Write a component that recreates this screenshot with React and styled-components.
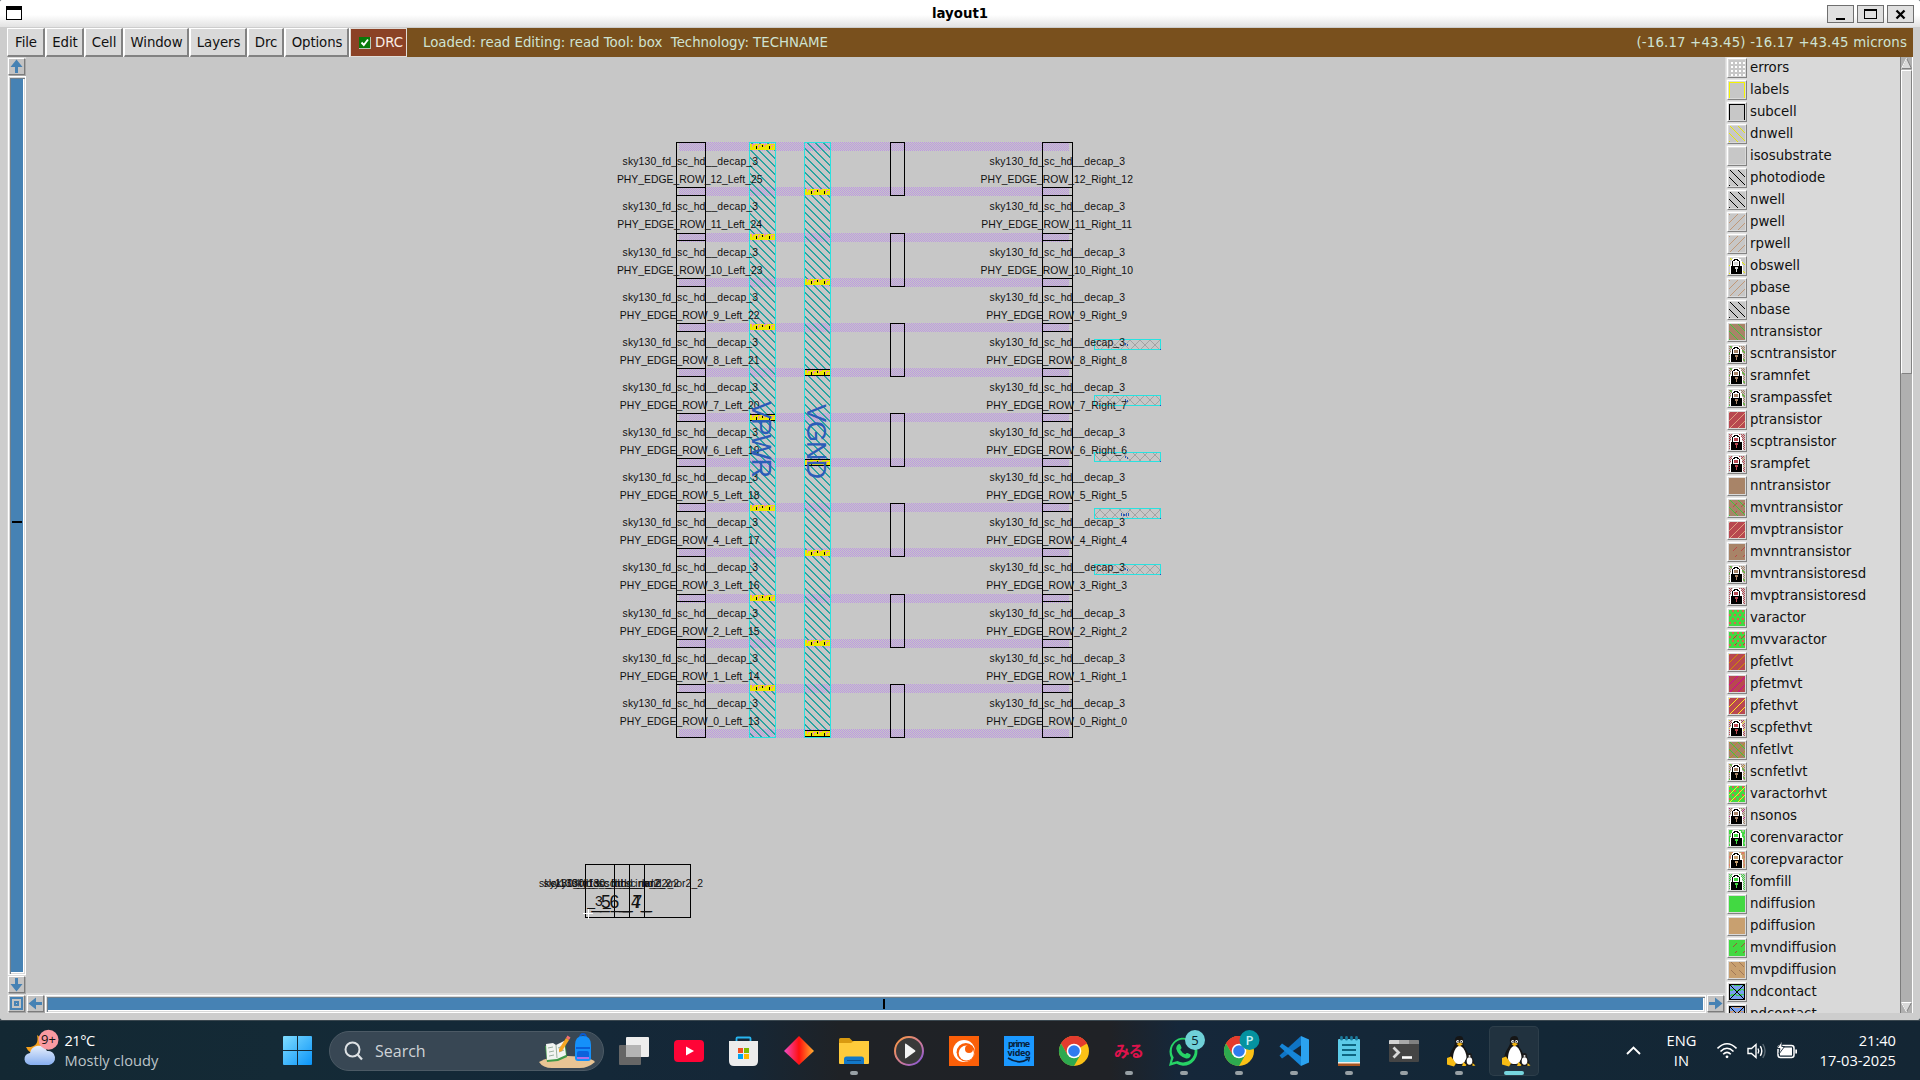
import React from 'react';
import styled, { createGlobalStyle, css } from 'styled-components';

const Global = createGlobalStyle`
  * { box-sizing: border-box; }
  html, body { margin: 0; padding: 0; overflow: hidden; background: #13262f; }
  svg { display: block; flex: none; }
`;

const ui = `"DejaVu Sans", sans-serif`;
const seg = `"Open Sans", "Noto Sans", sans-serif`;

const Desktop = styled.div`
  width: 1920px; height: 1080px; display: flex; flex-direction: column; overflow: hidden;
  background: #10222c;
`;
const Window = styled.div`
  height: 1020px; display: flex; flex-direction: column; background: #cdcdcd;
  border-radius: 2px; overflow: hidden; font-family: ${ui}; font-size: 13.33px; color: #111;
`;
const TitleBar = styled.div`
  height: 27px; flex: none; display: grid; grid-template-columns: 120px 1fr 120px; align-items: center;
  padding: 0 6px; background: linear-gradient(#fff 0, #fff 55%, #e2e2e2 100%);
`;
const Title = styled.div`text-align: center; font-weight: bold; color: #000; line-height: 27px; margin-top: -1px;`;
const WinButtons = styled.div`display: flex; justify-content: flex-end; gap: 3px; padding-top: 1px;`;
const WinButton = styled.div`
  width: 27px; height: 18px; border: 1px solid #6f6f6f; background: #e0e0e0;
  display: flex; align-items: center; justify-content: center;
`;
const Frame = styled.div`
  margin: 1px 7px 7px; flex: 1; min-height: 0; display: flex; flex-direction: column; background: #d9d9d9;
`;
const MenuRow = styled.div`height: 29px; flex: none; display: flex; background: #79501d;`;
const MenuButton = styled.div`
  width: ${p => p.$w}px; height: 29px; background: #d9d9d9; border: solid; border-width: 1px 2px 2px 1px;
  border-color: #fff #828282 #828282 #fff; display: flex; align-items: center; justify-content: center;
  white-space: nowrap; margin-right: 1px; box-shadow: 1px 0 0 #fff; line-height: 15px; padding-left: 1px; letter-spacing: -0.1px;
`;
const DrcButton = styled.div`
  width: 57px; height: 29px; background: #8b4226; border: 1px solid #e0dcd8;
  display: flex; align-items: center; gap: 4px; padding-left: 8px; color: #fbefe6;
`;
const Status = styled.div`
  flex: 1; display: flex; justify-content: space-between; align-items: center; padding: 0 6px 0 16px;
  color: #cfe3d3; white-space: pre;
`;
const StatusLeft = styled.span`letter-spacing: -0.01px;`;
const StatusRight = styled.span`letter-spacing: 0.16px;`;
const Body = styled.div`flex: 1; min-height: 0; display: grid; grid-template-columns: 1718px 175px 13px;`;
const Left = styled.div`display: flex; flex-direction: column; min-height: 0;`;
const CanvasRow = styled.div`height: 936px; flex: none; display: flex;`;
const VScroll = styled.div`width: 19px; display: flex; flex-direction: column; align-items: center; padding: 1px 0 0 0; gap: 1px;`;
const HScroll = styled.div`height: 20px; display: flex; align-items: center; padding: 1px 1px 0 1px; gap: 1px;`;
const Arrow = styled.div`
  width: 17px; height: 17px; flex: none; border: 1px solid; border-color: #fff #7b7b7b #7b7b7b #fff; background: #c3c3c3;
  box-shadow: 1px 1px 0 #a8a8a8; margin-right: ${p => p.$mr || 0}px;
  display: flex; align-items: center; justify-content: center;
`;
const Trough = styled.div`
  ${p => p.$v ? css`width: 18px; flex: 1; padding-bottom: 8px;` : css`height: 18px; flex: 1; padding-left: 16px;`}
  border: 1px solid #fff; background: #4682b4; display: flex; align-items: center; justify-content: center;
  box-shadow: inset 1px 1px 0 #d9d9d9, inset 2px 2px 0 #6f7f8c, inset -1px -1px 0 #d9d9d9, inset -2px -2px 0 #fff;
`;
const Mark = styled.div`background: #000; width: ${p => p.$v ? 10 : 2}px; height: ${p => p.$v ? 2 : 10}px;`;
const CanvasBox = styled.div`width: 1699px; height: 936px; background: #c7c7c7;`;

const Palette = styled.div`overflow: hidden; padding-left: 2px; height: 956px; background: #d9d9d9;`;
const LayerRow = styled.div`height: 22px; display: flex; align-items: center; gap: 3px;`;
const Swatch = styled.div`
  width: 20px; height: 20px; border: 1px solid; border-color: #fff #828282 #828282 #fff; padding: 1px;
  box-shadow: -0.5px -0.5px 0 #f2f2f2;
`;
const LayerName = styled.span`line-height: 16px; letter-spacing: -0.02px;`;
const Bar = styled.div`width: 13px; background: #b0b0b0; border-left: 1px solid #7c7c7c; border-right: 1px solid #fff; display: flex; flex-direction: column; height: 956px;`;
const Thumb = styled.div`height: 304px; background: #d9d9d9; border: 1px solid; border-color: #fff #828282 #828282 #fff; margin-bottom: auto;`;

const Taskbar = styled.div`
  height: 60px; border-top: 1px solid #3a474f; display: flex; align-items: center; color: #fff; font-family: ${seg};
  background: linear-gradient(90deg, #132833 0, #142a36 280px, #142838 600px, #152737 740px, #1f2226 840px, #202226 1110px, #15273a 1180px, #132736 1540px, #142634 1920px);
`;
const Weather = styled.div`width: 283px; display: flex; align-items: center; padding-left: 24px; gap: 5.5px;`;
const Lines = styled.div`
  display: flex; flex-direction: column; font-size: 14.65px; line-height: 20px; white-space: nowrap;
  text-align: ${p => p.$align || 'left'}; padding-bottom: 1px; margin-left: ${p => p.$push ? 'auto' : 0};
`;
const Line = styled.span`letter-spacing: ${p => p.$ls || 0}px; color: ${p => p.$dim ? '#bcc4c9' : '#fff'};`;
const Search = styled.div`
  width: 275px; height: 40px; margin-left: 17px; border-radius: 20px; border: 1px solid #4c5a65; background: #384754;
  display: flex; align-items: center; padding: 0 7px 0 13px;
`;
const SearchText = styled.span`flex: 1; padding-left: 10px; font-size: 16px; color: #ced3d7; line-height: 20px;`;
const Apps = styled.div`display: flex; margin-left: 2.5px;`;
const Slot = styled.div`width: 55px; height: 58px; display: flex; flex-direction: column; align-items: center; padding: 0 2.5px;`;
const AppFace = styled.div`
  width: 50px; height: 50px; margin-top: 4px; border-radius: 5px; display: flex; flex-direction: column; align-items: center;
  ${p => p.$active && css`background: #21323f; box-shadow: inset 0 0 0 1px #2d3e4a;`}
`;
const Dot = styled.div`
  height: 4px; border-radius: 2px; margin-top: -5px; width: ${p => p.$active ? 20 : 8}px; z-index: 1;
  background: ${p => p.$active ? '#76d5de' : '#98a0a5'};
`;
const Tray = styled.div`flex: 1; display: flex; align-items: center; padding: 0 24px 0 84px;`;
const Spacer = styled.div`width: ${p => p.$w}px; flex: none;`;

/* ---------- layer palette ---------- */
const G = '#c7c7c7', BR = '#a88468', RD = '#b84850', GN = '#42d942', TN = '#c8a070', YL = '#e8e800';
const pix = test => {
  let d = '';
  for (let y = 0; y < 16; y++) for (let x = 0; x < 16; x++) if (test(x, y)) d += `M${x} ${y}h1v1h-1z`;
  return d;
};
const P = {
  back: pix((x, y) => (x - y + 16) % 8 === 1),
  fwd: pix((x, y) => (x + y) % 8 === 0),
  fwdShort: pix((x, y) => (x + y) % 8 === 2 && y % 8 > 2 && y % 8 < 7 && (x + (y > 8 ? 4 : 0)) % 8 > 1),
  backShort: pix((x, y) => (x - y + 16) % 8 === 2 && (y % 8 < 5)),
  check: pix((x, y) => (x + y) % 2 === 0),
  dots: pix((x, y) => x % 4 > 1 && y % 4 > 1),
  blobs: pix((x, y) => y % 4 < 2 && (x + (y % 8 < 4 ? 2 : 0)) % 5 < 2),
  frame: pix((x, y) => y === 0 || x === 0 || x === 15),
  waves: pix((x, y) => y % 5 < 2 && (x + y * 3) % 8 < 6),
  cross: pix((x, y) => x === y || x + y === 15 || y === 0 || y === 15 || x === 0 || x === 15),
};
const layers = [
  ['errors', G, [['dots', '#fff']]], ['labels', G, [['frame', '#f4f400']]], ['subcell', G, [['frame', '#000']]],
  ['dnwell', G, [['back', YL]]], ['isosubstrate', G, []], ['photodiode', G, [['back', '#000']]], ['nwell', G, [['back', '#000']]],
  ['pwell', G, [['fwd', '#c09878']]], ['rpwell', G, [['fwd', '#c09878']]], ['obswell', G, [['back', YL]], 1],
  ['pbase', G, [['fwd', '#c09878']]], ['nbase', G, [['back', '#000']]], ['ntransistor', BR, [['back', '#3cc83c']]],
  ['scntransistor', G, [['check', BR], ['back', GN]], 1], ['sramnfet', G, [['check', BR], ['back', GN]], 1],
  ['srampassfet', G, [['check', BR], ['back', GN]], 1], ['ptransistor', RD, [['fwd', '#e0a080']]],
  ['scptransistor', G, [['check', RD]], 1], ['srampfet', G, [['check', RD], ['fwd', TN]], 1], ['nntransistor', BR, []],
  ['mvntransistor', BR, [['back', '#3cc83c'], ['fwdShort', '#c04848']]], ['mvptransistor', RD, [['fwd', '#e0a080']]],
  ['mvnntransistor', BR, [['fwdShort', '#b84848']]], ['mvntransistoresd', G, [['check', BR], ['back', GN]], 1],
  ['mvptransistoresd', G, [['check', RD]], 1], ['varactor', GN, [['blobs', '#e06050']]],
  ['mvvaractor', GN, [['blobs', '#e06050'], ['fwdShort', '#a05030']]], ['pfetlvt', RD, [['fwd', '#d09000']]],
  ['pfetmvt', RD, [['fwd', '#d000a0']]], ['pfethvt', RD, [['fwd', '#ffe820']]],
  ['scpfethvt', G, [['check', RD], ['fwd', '#f0d020']], 1], ['nfetlvt', BR, [['fwd', '#b89020'], ['back', '#3cc83c']]],
  ['scnfetlvt', G, [['check', BR], ['fwd', '#c09020'], ['back', GN]], 1],
  ['varactorhvt', GN, [['blobs', '#e06050'], ['fwd', '#f0f020']]], ['nsonos', G, [['check', BR], ['fwd', '#c02080']], 1],
  ['corenvaractor', GN, [['blobs', '#a0c890']], 1], ['corepvaractor', TN, [['blobs', '#e07868']], 1],
  ['fomfill', G, [['check', GN]], 1], ['ndiffusion', GN, []], ['pdiffusion', TN, []],
  ['mvndiffusion', GN, [['fwdShort', '#a05038']]], ['mvpdiffusion', TN, [['backShort', '#a07858']]],
  ['ndcontact', '#78a0f0', [['waves', '#42c860'], ['cross', '#000']]],
  ['pdcontact', '#78a0f0', [['waves', '#c8a080'], ['cross', '#000']]],
];
const Lock = ({ tint }) => (
  <g>
    <path d="M4 0h6v1h2v2h1v4h1v9H1V7h1V3h1V1h1z" fill="#fff" />
    <path d="M5 4h4v3H5z" fill={tint} />
    <path d="M5 1h4v1H5zM4 2h2v1H4zM8 2h2v1H8zM3 3h1v5H3zM10 3h1v5h-1zM2 8h11v8H2z" fill="#000" />
    <path d="M6 9h3v2H8v3H7v-3H6z" fill={tint} />
    <path d="M4 7h6v1H4z" fill="#fff" />
  </g>
);
const LayerIcon = ({ bg, marks, lock }) => (
  <svg width="16" height="16" viewBox="0 0 16 16" shapeRendering="crispEdges">
    <rect width="16" height="16" fill={bg} />
    {marks.map(([k, c], i) => <path key={i} d={P[k]} fill={c} />)}
    {lock && <Lock tint={marks[0][1] === YL ? '#d8d8d8' : marks[0][0] === 'blobs' ? bg : marks[0][1]} />}
  </svg>
);

/* ---------- layout canvas ---------- */
const tops = [142, 187, 233, 278, 323, 368, 413, 458, 503, 548, 594, 639, 684];
const bands = [...tops, 729];
const diag = (n, f, w = 1) => Array.from({ length: n }, (_, i) => `M${i} ${f(i)}h${w}v1h-${w}z`).join('');
const Via = ({ x, y, dark }) => (
  <g>
    <rect x={x} y={y} width="25" height={dark ? 5 : 6} fill="#ebe800" />
    {[2, 8, 14, 21].map((o, i) => <path key={o} d={`M${x + o} ${y + (i % 2)}h3v1h-2v2h-1z`} fill="#f888b0" />)}
    <path d={`M${x + 6} ${y + 2}h1v3h-1zM${x + 12} ${y + 1}h1v2h-1zM${x + 19} ${y + 2}h1v3h-1z`} fill="#000" />
    {dark && <path d={`M${x} ${y - 1}h25v1h-25zM${x} ${y + 5}h25v1h-25z`} fill="#000" />}
  </g>
);
const T = ({ x, y, s = 10.4, children, ...r }) => (
  <text x={x} y={y} fontSize={s} textAnchor="middle" fontFamily='"Liberation Sans", Arial, sans-serif' fill="#111" {...r}>{children}</text>
);
const LayoutDrawing = () => (
  <svg width="1699" height="936" viewBox="26 57 1699 936">
    <defs>
      <pattern id="purple" width="2" height="2" patternUnits="userSpaceOnUse">
        <path d="M0 0h1v1h-1zM1 1h1v1h-1z" fill="#bd98e2" />
      </pattern>
      <pattern id="hatch" width="8" height="8" patternUnits="userSpaceOnUse">
        <path d={diag(8, i => i, 2) + 'M0 7h1v1h-1z'} fill="#2aa4a1" />
      </pattern>
      <pattern id="mesh" width="10" height="10" patternUnits="userSpaceOnUse">
        <path d={diag(10, i => i) + diag(10, i => 9 - i)} fill="#a3a3a3" />
      </pattern>
    </defs>
    <g shapeRendering="crispEdges">
      {bands.map(y => <rect key={y} x="679" y={y} width="390" height="9" fill="url(#purple)" />)}
      {[749, 804].map(x => (
        <g key={x}>
          <rect x={x} y="142" width="27" height="596" fill="url(#hatch)" />
          <rect x={x + 0.5} y="142.5" width="26" height="595" fill="none" stroke="#28e2e0" />
        </g>
      ))}
      {bands.map((y, k) => <Via key={y} x={k % 2 ? 805 : 750} y={Math.round(144 + 45.12 * k)} dark={[5, 6, 7, 13].includes(k)} />)}
      {tops.map((y, k) => (
        <g key={y} fill="none" stroke="#000">
          <rect x="676.5" y={y + 0.5} width="29" height="53" />
          <rect x="1042.5" y={y + 0.5} width="30" height="53" />
          {k % 2 === 0 && <rect x="890.5" y={y + 0.5} width="14" height="53" />}
        </g>
      ))}
      {[[339, 11], [395, 11], [452, 10], [508, 11], [564, 11]].map(([y, h], i) => (
        <g key={y}>
          <rect x="1094" y={y} width="67" height={h} fill="url(#mesh)" />
          <rect x="1094.5" y={y + 0.5} width="66" height={h - 1} fill="none" stroke="#28e2e0" />
          <path d={i === 3 ? `M1121 ${y + 5}h1v3h-1zM1123 ${y + 6}h2v2h-2zM1126 ${y + 5}h1v3h-1zM1128 ${y + 5}h1v3h-1z` : `M1125 ${y + 4}h1v2h-1zM1127 ${y + 5}h1v2h-1z`} fill="#2d5cb8" />
          <rect x="1160" y={y + h - 1} width="1" height="1" fill="#1f50c0" />
        </g>
      ))}
    </g>
    {tops.map((y, k) => {
      const n = 12 - k;
      return (
        <g key={y}>
          <T x={690.3} y={y + 23} textLength="135.500">sky130_fd_sc_hd__decap_3</T>
          <T x={689.7} y={y + 41}>{`PHY_EDGE_ROW_${n}_Left_${n + 13}`}</T>
          <T x={1057.3} y={y + 23} textLength="135.500">sky130_fd_sc_hd__decap_3</T>
          <T x={1056.7} y={y + 41}>{`PHY_EDGE_ROW_${n}_Right_${n}`}</T>
        </g>
      );
    })}
    <g fontFamily='"Liberation Sans", Arial, sans-serif' fontSize="27" fill="#2d5cb8">
      <text transform="translate(752 401) rotate(90)" textLength="77">VPWR</text>
      <text transform="translate(807 404) rotate(90)" textLength="75">VGND</text>
    </g>
    <g shapeRendering="crispEdges" fill="none" stroke="#000">
      <rect x="585.5" y="864.5" width="105" height="53" />
      <path d="M614.5 864v53M629.5 864v53M644.5 864v53" />
    </g>
    <T x="600" y="886.5" textLength="122">sky130_fd_sc_hd__inv_2</T>
    <T x="607.5" y="886.5" textLength="128">sky130_fd_sc_hd__nor2_2</T>
    <T x="615" y="886.5" textLength="128">sky130_fd_sc_hd__and2_2</T>
    <T x="637.5" y="886.5" textLength="131">sky130_fd_sc_hd__xnor2_2</T>
    <T x="599" y="905.5" s={14}>_3_</T>
    <T x="606" y="908" s={17.5}>_5_</T>
    <T x="614.5" y="908" s={17.5}>_6_</T>
    <T x="636" y="908" s={17.5}>_4_</T>
    <T x="637.5" y="908" s={17.5}>_7_</T>
    <path d="M583 913.5h10M588.5 909v10" stroke="#fff" shapeRendering="crispEdges" />
  </svg>
);

/* ---------- taskbar icons ---------- */
const Ico = ({ children }) => <svg width="50" height="50" viewBox="-25 -25 50 50">{children}</svg>;
const Chrome = () => (
  <g>
    <circle r="15" fill="#fbc116" />
    <path d="M0 0L-13 -7.5A15 15 0 0 1 13 -7.5z" fill="#e33b2e" />
    <path d="M0 -7.5H13A15 15 0 0 0 -13 -7.5L-6.5 3.7z" fill="#e33b2e" />
    <path d="M-13 -7.5A15 15 0 0 0 0 15L6.5 3.7L-6.5 3.7z" fill="#2da94f" />
    <circle r="7.3" fill="#fff" /><circle r="5.8" fill="#2f7bef" />
  </g>
);
const Badge = ({ fill, color, label, weight, dx = 11 }) => (
  <g><circle cx={dx} cy="-11" r="10" fill={fill} />
    <text x={dx} y="-6.3" fontSize="13" textAnchor="middle" fontFamily="Open Sans, sans-serif" fontWeight={weight} fill={color}>{label}</text></g>
);
const Tux = () => (
  <g transform="translate(1.500 0)">
    <path d="M-1 -15c-4 0-5 3-4.500 7c.3 3-5.500 8-5.500 14c0 5 4 8 9 8s10-2 10-8c0-6-5-9-5-13c0-5 0-8-4-8z" fill="#151515" />
    <path d="M-1 -5c-4 0-6.500 7-6.500 12c0 4 3 6 6.500 6s7-2 7-6c0-5-3-12-7-12z" fill="#fff" />
    <circle cx="-2.800" cy="-9.500" r="1.500" fill="#fff" /><circle cx="1" cy="-9.500" r="1.500" fill="#fff" />
    <circle cx="-2.500" cy="-9.300" r=".7" /><circle cx=".8" cy="-9.300" r=".7" />
    <path d="M-4 -7l3-1.500l3.500 1.500l-3.500 2.500z" fill="#f2b413" />
    <path d="M-13.500 7l4-1.500l5 7l-2 3l-7-2z" fill="#f8bc14" />
    <path d="M9 2c-2 0-2.500 2-2.300 3.500S4 9 4 12s2 3 5 3s5-1 5-3s-2.500-5-2.500-7S11 2 9 2z" fill="#1a1a1a" />
    <ellipse cx="9" cy="10" rx="2.800" ry="3.800" fill="#fff" /><circle cx="9" cy="5" r="1" fill="#ddd" />
    <path d="M3 11l3 3l-1 1H1.500zM12 12l3 2.500l-3 .5z" fill="#f8bc14" />
  </g>
);
const apps = [
  [<g><rect x="-15" y="-6" width="22" height="20" rx="1" fill="#666" /><rect x="-8" y="-14" width="23" height="20" rx="1" fill="#ededed" /><path d="M-8 -6H7V6H-8z" fill="#b4b4b4" /></g>],
  [<g><rect x="-15" y="-11" width="30" height="22" rx="4" fill="#ff0436" /><path d="M-3 -4.500L5 0L-3 4.500z" fill="#fff" /></g>],
  [<g><path d="M-7.500 -7V-12.500Q-7.500 -13.500 -6.500 -13.500H5.500Q6.500 -13.500 6.500 -12.500V-7" fill="none" stroke="#28b5f0" strokeWidth="1.800" /><path d="M-15 -10H14V10Q14 15 9 15H-10Q-15 15 -15 10z" fill="#ececec" /><path d="M-6 -3h5v5h-5z" fill="#f05023" /><path d="M0 -3h5v5h-5z" fill="#7eba00" /><path d="M-6 3h5v5h-5z" fill="#00a3ee" /><path d="M0 3h5v5h-5z" fill="#ffb800" /></g>],
  [<g><defs><linearGradient id="dia"><stop offset="0" stopColor="#f04cc8" /><stop offset=".5" stopColor="#ff1010" /><stop offset=".55" stopColor="#ff2010" /><stop offset="1" stopColor="#ffb030" /></linearGradient></defs><path d="M0 -15L15 0L0 14L-15 0z" fill="url(#dia)" /></g>],
  [<g><path d="M-15 -11.500q0-1.500 1.500-1.500h9l3 3h15q1 0 1 1v7h-29.500z" fill="#d99a10" /><path d="M-15 -8h12l3-2h15v22q0 1-1 1h-28q-1 0-1-1z" fill="#ffcb3b" /><path d="M-10 13V8q0-2.500 2.500-2.500h15q2.500 0 2.500 2.500v5z" fill="#1378c8" /><path d="M-7 9.500H7" stroke="#0b4f8c" /></g>, 1],
  [<g><defs><linearGradient id="mp" x2="1" y2="1"><stop offset="0" stopColor="#ff9a3c" /><stop offset=".6" stopColor="#c878a0" /><stop offset="1" stopColor="#7a50e0" /></linearGradient></defs><circle r="14" fill="#393939" stroke="url(#mp)" strokeWidth="2" /><path d="M-4 -6.500Q-4 -8 -2.600 -7L6 -.8Q7 0 6 .8L-2.600 7Q-4 8 -4 6.500z" fill="#f4f4f4" /></g>],
  [<g><rect x="-15" y="-15" width="30" height="30" fill="#fb5f08" /><circle r="11" fill="#fff" /><circle cx="1.800" cy="1.300" r="9.200" fill="#fb5f08" /><circle cx="2.300" cy="2" r="7.600" fill="#fff" /><circle cx="5" cy="-2" r="4" fill="#fb5f08" /></g>],
  [<g><rect x="-15" y="-15" width="30" height="30" fill="#1a98ff" /><g fontFamily="Open Sans, sans-serif" fontWeight="700" fontSize="9" fill="#07203c" textAnchor="middle"><text y="-4" textLength="22">prime</text><text y="4.500" textLength="23">video</text></g><path d="M-11 7Q0 14 9 8" fill="none" stroke="#07203c" strokeWidth="1.700" /><path d="M6.500 6.500h4l-1 4" fill="none" stroke="#07203c" strokeWidth="1.300" /></g>],
  [<Chrome />],
  [<text y="5.500" fontSize="15.500" textLength="30" fontFamily="Noto Sans CJK JP, sans-serif" fontWeight="700" textAnchor="middle" fill="#e0124c">みる</text>, 1],
  [<g><path d="M-15 15L-13 7A14 14 0 1 1 -7.500 12.800z" fill="#27d366" /><path d="M-12 11.500L-10.300 6.500A11.500 11.500 0 1 1 -6.500 10z" fill="#142737" /><path d="M-6.500 -6q2-2 3 0l1 2.500q.3 1-1.200 2.200q1.800 3.300 5 4.600q1.300-1.800 2.200-1.300l2.700 1.300q1 .6.300 2q-1.500 3-5 2Q-6 4.500-7.800-2.300Q-7.800-4.500-6.500-6z" fill="#27d366" /><Badge fill="#6fd0d8" color="#08202a" label="5" /></g>, 1],
  [<g><Chrome /><Badge fill="#0592a0" color="#c8f0f4" label="P" weight="600" dx={10.5} /></g>, 1],
  [<g><path d="M7 -15L-14.500 4.500L-12 7.500L7.500 -6z" fill="#0f74c4" /><path d="M7 15L-14.500 -4.500L-12 -7.500L7.500 6z" fill="#1686d8" /><path d="M7 -15L15 -11.500V11.500L7 15z" fill="#2ba2f0" /></g>, 1],
  [<g><rect x="-11" y="-12" width="22" height="25" rx="1" fill="#5ccbe8" /><path d="M-11 11h22v4h-22z" fill="#a85420" /><path d="M-11 11h22v1.500h-22z" fill="#f2eee8" />{[-7.500, -2.500, 2.500, 7.500].map(x => <rect key={x} x={x - 1.300} y="-15" width="2.600" height="4.500" rx="1.300" fill="#1a7a9c" />)}<path d="M-7 -6H7M-7 -1H7M-7 4H7" stroke="#0e6580" strokeWidth="1.800" /></g>, 1],
  [<g><rect x="-15" y="-11" width="30" height="22" rx="1" fill="#454545" /><path d="M-15 -10q0-1 1-1h9v4h-10z" fill="#d4d4d4" /><path d="M-5 -11h10v4H-5z" fill="#a8a8a8" /><path d="M5 -11h9q1 0 1 1v3H5z" fill="#808080" /><path d="M-10.500 -3.500L-5.500 1.500L-10.500 6.500" fill="none" stroke="#d8d8d8" strokeWidth="2.800" /><path d="M-2 6.500H8" stroke="#fff" strokeWidth="2.600" /></g>, 1],
  [<Tux />, 1],
  [<Tux />, 2],
];

const menus = [['File', 38], ['Edit', 38], ['Cell', 38], ['Window', 65], ['Layers', 57], ['Drc', 36], ['Options', 64]];
const arrow = { up: 0, right: 90, down: 180, left: 270 };
const ArrowIcon = ({ dir }) => (
  <svg width="15" height="15" viewBox="0 0 15 15"><path transform={`rotate(${arrow[dir]} 7.5 7.500)`} d="M7.500 0.500L13.500 8H9V14H6V8H1.500z" fill="#4682b4" /></svg>
);

export default function App() {
  return (
    <Desktop>
      <Global />
      <Window>
        <TitleBar>
          <svg width="16" height="15" viewBox="0 0 16 15" shapeRendering="crispEdges"><path d="M0 0h16v14H0z" /><path d="M1 4h14v9H1z" fill="#fff" /></svg>
          <Title>layout1</Title>
          <WinButtons>
            <WinButton><svg width="25" height="16" shapeRendering="crispEdges"><path d="M8 12h9v2H8z" /></svg></WinButton>
            <WinButton><svg width="25" height="16" shapeRendering="crispEdges"><path d="M6 3h13v10H6zM7 5v7h11V5z" fillRule="evenodd" /></svg></WinButton>
            <WinButton><svg width="25" height="16"><path d="M8.500 4.500l8 8M16.500 4.500l-8 8" stroke="#000" strokeWidth="2.300" /></svg></WinButton>
          </WinButtons>
        </TitleBar>
        <Frame>
          <MenuRow>
            {menus.map(([m, w]) => <MenuButton key={m} $w={w}>{m}</MenuButton>)}
            <DrcButton>
              <svg width="12" height="12" viewBox="0 0 12 12"><path d="M0 0h12v12H0z" fill="#b8c8b8" /><path d="M0 0h11v11H0z" fill="#0a7a0a" /><path d="M2.500 5.500L4.800 8L9 2.500" fill="none" stroke="#fff" strokeWidth="1.900" /></svg>
              DRC
            </DrcButton>
            <Status>
              <StatusLeft>Loaded: read Editing: read Tool: box  Technology: TECHNAME</StatusLeft>
              <StatusRight>(-16.17 +43.45) -16.17 +43.45 microns</StatusRight>
            </Status>
          </MenuRow>
          <Body>
            <Left>
              <CanvasRow>
                <VScroll>
                  <Arrow $mr={1}><ArrowIcon dir="up" /></Arrow>
                  <Trough $v><Mark $v /></Trough>
                  <Arrow $mr={1}><ArrowIcon dir="down" /></Arrow>
                </VScroll>
                <CanvasBox><LayoutDrawing /></CanvasBox>
              </CanvasRow>
              <HScroll>
                <Arrow $mr={1}><svg width="13" height="13" viewBox="0 0 13 13" shapeRendering="crispEdges"><path d="M1 1h11v11H1z" fill="none" stroke="#4682b4" strokeWidth="2" /><path d="M5 5h3v3H5z" fill="none" stroke="#4682b4" strokeWidth="1.500" /></svg></Arrow>
                <Arrow><ArrowIcon dir="left" /></Arrow>
                <Trough><Mark /></Trough>
                <Arrow><ArrowIcon dir="right" /></Arrow>
              </HScroll>
            </Left>
            <Palette>
              {layers.map(([n, bg, marks, lock]) => (
                <LayerRow key={n}><Swatch><LayerIcon bg={bg} marks={marks} lock={lock} /></Swatch><LayerName>{n}</LayerName></LayerRow>
              ))}
            </Palette>
            <Bar>
              <svg width="11" height="13" viewBox="0 0 11 13"><path d="M5.500 1L10.500 11.500H.5z" fill="#d9d9d9" stroke="#828282" /><path d="M5.500 1L.5 11.500" stroke="#fff" /></svg>
              <Thumb />
              <svg width="11" height="11" viewBox="0 0 11 11"><path d="M.5 .5H10.500L5.500 10z" fill="#d9d9d9" stroke="#828282" /><path d="M10.500 .5H.5L5.500 10" fill="none" stroke="#fff" /></svg>
            </Bar>
          </Body>
        </Frame>
      </Window>
      <Taskbar>
        <Weather>
          <svg width="35" height="46" viewBox="24 1026 35 46">
            <path d="M37 1033Q40 1046 26 1045Q30 1054 41 1050Q50 1042 37 1033z" fill="#f5a01c" />
            <defs><linearGradient id="cl" x2="0" y2="1"><stop offset="0" stopColor="#e8f0fc" /><stop offset="1" stopColor="#86aef0" /></linearGradient></defs>
            <path d="M31 1063a6 6 0 0 1-1-12a9 9 0 0 1 17-2a7 7 0 0 1 2 14z" fill="url(#cl)" />
            <circle cx="48.500" cy="1037.700" r="10" fill="#f99aa2" />
            <text x="48.500" y="1042.300" fontSize="13" textAnchor="middle" fontFamily="Open Sans, sans-serif" fill="#111">9+</text>
          </svg>
          <Lines><Line $ls={-0.5}>21°C</Line><Line $dim>Mostly cloudy</Line></Lines>
        </Weather>
        <svg width="29" height="29" viewBox="0 0 29 29"><defs><linearGradient id="win" x2="1" y2="1"><stop offset="0" stopColor="#7fdcff" /><stop offset="1" stopColor="#0a94f8" /></linearGradient></defs><path d="M1 0h13v14H0V1q0-1 1-1zM15 0h13q1 0 1 1v13H15zM0 15h14v14H1q-1 0-1-1zM15 15h14v13q0 1-1 1H15z" fill="url(#win)" /></svg>
        <Search>
          <svg width="22" height="22" viewBox="0 0 22 22"><circle cx="9.500" cy="9.500" r="7" fill="none" stroke="#dde1e4" strokeWidth="2" /><path d="M14.500 14.500L19 19.500" stroke="#dde1e4" strokeWidth="2.200" /></svg>
          <SearchText>Search</SearchText>
          <svg width="58" height="36" viewBox="0 -1 58 36">
            <path d="M1 28Q10 22 30 22Q52 22 57 28Q50 34 42 34H14Q5 34 1 28z" fill="#e8c494" />
            <path d="M7 12l8-2l3 2l9-4l2 15l-9 4l-11 1z" fill="#3f9a48" /><path d="M8 10l7-1l3 2l8-4l2 14l-9 4l-10 1z" fill="#f2f4f2" /><path d="M18 11l1 13M10 14l5-1M11 18l5-1M11 22l5-1M20 14l5-2M21 18l5-2" stroke="#9ab0a0" fill="none" />
            <path d="M21 15l7-11l3 2l-7 11l-3 1z" fill="#f5a623" /><path d="M28 4l1.500-2.500l3 2L31 6z" fill="#f07070" />
            <path d="M42 4q0-4 3-4t3 4" fill="none" stroke="#0b5ad0" strokeWidth="1.800" />
            <path d="M37 11q0-9 8-9t8 9v13q0 3-3 3H40q-3 0-3-3z" fill="#1590fa" /><path d="M38 13h14v2H38z" fill="#0a5fd8" /><path d="M39 19q0-2 2-2h8q2 0 2 2v5H39z" fill="#0c62dc" /><path d="M39 23h12v2H39z" fill="#b070e8" />
          </svg>
        </Search>
        <Apps>
          {apps.map(([icon, state], i) => (
            <Slot key={i}><AppFace $active={state === 2}><Ico>{icon}</Ico></AppFace>{state && <Dot $active={state === 2} />}</Slot>
          ))}
        </Apps>
        <Tray>
          <svg width="15" height="9" viewBox="0 0 15 9"><path d="M1 8L7.500 1.500L14 8" fill="none" stroke="#fff" strokeWidth="1.900" /></svg>
          <Spacer $w={26} />
          <Lines $align="center"><Line>ENG</Line><Line>IN</Line></Lines>
          <Spacer $w={21} />
          <svg width="20" height="18" viewBox="0 0 20 18" fill="none" stroke="#fff" strokeWidth="1.600"><path d="M.5 6.500Q10 -3 19.500 6.500" /><path d="M3.500 9.500Q10 3 16.500 9.500" /><path d="M6.200 12.300Q10 8.500 13.800 12.300" /><circle cx="10" cy="14.800" r="1.400" fill="#fff" stroke="none" /></svg>
          <Spacer $w={10} />
          <svg width="20" height="18" viewBox="0 0 20 18" fill="none" stroke="#fff" strokeWidth="1.400"><path d="M1 6.500h3.500L9 2.500v13L4.500 11.500H1z" /><path d="M11 6.500q1.500 2.500 0 5M13.300 4.200q3 4.800 0 9.600" /><path d="M15.800 2.200q4.500 6.800 0 13.600" stroke="#5a6872" /></svg>
          <Spacer $w={10} />
          <svg width="21" height="18" viewBox="0 0 21 18"><rect x="1" y="3.500" width="16" height="12" rx="2.500" fill="none" stroke="#fff" strokeWidth="1.500" /><path d="M3 5.500h12v8H3z" fill="#fff" /><path d="M18.300 7.500h1.700v4h-1.700z" fill="#fff" /><path d="M5 -1L0 6.500H3L2 12l5.500-7.500H4.800z" fill="#fff" stroke="#142634" strokeWidth=".9" /></svg>
          <Lines $align="right" $push><Line>21:40</Line><Line>17-03-2025</Line></Lines>
        </Tray>
      </Taskbar>
    </Desktop>
  );
}
